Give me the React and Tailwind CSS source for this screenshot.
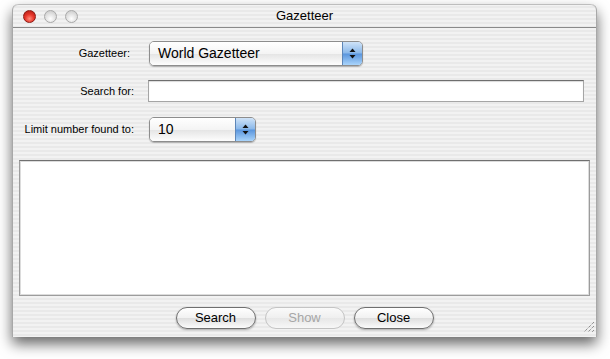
import React from 'react';

const stripes =
  'bg-[image:repeating-linear-gradient(to_bottom,#f2f2f2_0px,#f2f2f2_2px,#e9e9e9_2px,#e9e9e9_4px)]';

function Light({ color }) {
  const red = color === 'red';
  return (
    <span
      className={
        'w-[13px] h-[13px] rounded-full border ' +
        (red
          ? 'border-[#8c1a14] bg-[radial-gradient(circle_at_50%_70%,#ff8a7a_0%,#e8382c_45%,#a8160f_100%)]'
          : 'border-[#a9a9a9] bg-[radial-gradient(circle_at_50%_70%,#ffffff_0%,#e2e2e2_50%,#c4c4c4_100%)]')
      }
    />
  );
}

function Arrows() {
  return (
    <svg width="7" height="11" viewBox="0 0 7 11">
      <path d="M3.5 0.5 L6.5 4 L0.5 4 Z" fill="#111" />
      <path d="M3.5 10.5 L6.5 7 L0.5 7 Z" fill="#111" />
    </svg>
  );
}

function Popup({ value, width }) {
  return (
    <div
      className={
        'h-[25px] rounded-[5px] border border-[#8d8d8d] flex overflow-hidden shadow-[0_1px_1px_rgba(0,0,0,0.25)] ' +
        width
      }
    >
      <div className="flex-1 flex items-center pl-[8px] text-[14px] text-black bg-[linear-gradient(to_bottom,#ffffff_0%,#f4f4f4_50%,#e4e4e4_51%,#fdfdfd_100%)]">
        {value}
      </div>
      <div className="w-[20px] flex items-center justify-center border-l border-[#5d86b8] bg-[linear-gradient(to_bottom,#cfe3f8_0%,#8ab8ea_48%,#5a95dd_52%,#a9d4fb_100%)]">
        <Arrows />
      </div>
    </div>
  );
}

function AquaButton({ label, disabled }) {
  return (
    <button
      className={
        'w-[80px] h-[22px] rounded-full border text-[13px] flex items-center justify-center ' +
        (disabled
          ? 'border-[#c4c4c4] text-[#a6a6a6] bg-[linear-gradient(to_bottom,#fafafa_0%,#efefef_50%,#e7e7e7_51%,#f7f7f7_100%)]'
          : 'border-[#6f6f6f] text-black shadow-[0_1px_2px_rgba(0,0,0,0.3)] bg-[linear-gradient(to_bottom,#ffffff_0%,#f1f1f1_50%,#dedede_51%,#fbfbfb_100%)]')
      }
    >
      {label}
    </button>
  );
}

export default function App() {
  return (
    <div
      className="w-[610px] h-[359px] bg-white pl-[12px] pt-[4px]"
      style={{ fontFamily: '"Liberation Sans", Arial, sans-serif' }}
    >
      <div
        className={
          'w-[585px] h-[333px] rounded-t-[6px] flex flex-col border-x border-[#a8a8a8] shadow-[0_7px_14px_rgba(0,0,0,0.6)] ' +
          stripes
        }
      >
        <div className="h-[24px] relative flex items-center justify-center border-b border-[#8a8a8a] border-t border-t-[#bdbdbd] rounded-t-[6px]">
          <div className="absolute left-[10px] top-[5px] flex gap-[8px]">
            <Light color="red" />
            <Light />
            <Light />
          </div>
          <span className="text-[13px] text-black">Gazetteer</span>
        </div>

        <div className="flex-1 flex flex-col px-[6px]">
          <div className="flex items-center mt-[12px] h-[26px]">
            <span className="w-[115px] text-right text-[11px] text-black pr-[4px]">Gazetteer:</span>
            <span className="w-[15px]" />
            <Popup value="World Gazetteer" width="w-[214px]" />
          </div>

          <div className="flex items-center mt-[14px] h-[22px] pr-[6px]">
            <span className="w-[115px] text-right text-[11px] text-black">Search for:</span>
            <span className="w-[14px]" />
            <input
              className="flex-1 h-[22px] bg-white border border-[#a5a5a5] border-t-[#6e6e6e] shadow-[inset_0_1px_1px_rgba(0,0,0,0.15)] outline-none"
              defaultValue=""
            />
          </div>

          <div className="flex items-center mt-[14px] h-[26px]">
            <span className="w-[115px] text-right text-[11px] text-black">Limit number found to:</span>
            <span className="w-[15px]" />
            <Popup value="10" width="w-[107px]" />
          </div>

          <div className="mt-[18px] h-[136px] bg-white border border-[#9c9c9c] border-t-[#707070] shadow-[inset_0_0_0_1px_#dcdcdc]" />

          <div className="flex justify-center gap-[9px] mt-[11px]">
            <AquaButton label="Search" />
            <AquaButton label="Show" disabled />
            <AquaButton label="Close" />
          </div>

          <div className="flex justify-end mt-[-9px] mr-[-5px]">
            <svg width="13" height="13" viewBox="0 0 13 13">
              <path d="M12 2 L2 12 M12 6 L6 12 M12 10 L10 12" stroke="#6a6a6a" strokeWidth="1" strokeDasharray="1 1" />
            </svg>
          </div>
        </div>
      </div>
    </div>
  );
}
